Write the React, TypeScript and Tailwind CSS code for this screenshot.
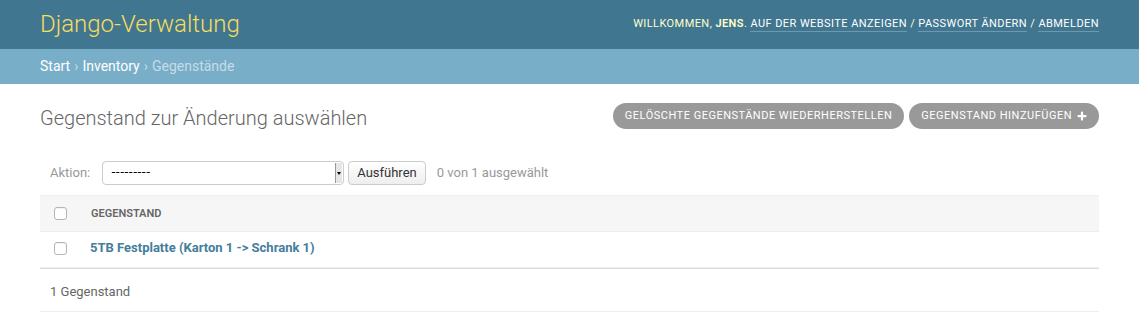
import { Plus } from 'lucide-react';

const font = { fontFamily: 'Roboto, "Liberation Sans", sans-serif' };

function Checkbox() {
  return <span className="inline-block w-[13px] h-[13px] rounded-[3px] border border-[#b5b5b5] bg-white shadow-[inset_0_1px_1px_rgba(0,0,0,0.05)]" />;
}

export default function App() {
  return (
    <div className="w-[1139px] h-[320px] bg-white overflow-hidden" style={font}>
      <header className="h-[49px] bg-[#417690] px-10 flex items-center justify-between">
        <h1 className="text-[24px] font-light text-[#f5dd5d] leading-none -mt-[2px]">Django-Verwaltung</h1>
        <div className="text-[11px] uppercase tracking-[0.43px] text-[#ffc] -mt-[1px]">
          Willkommen, <strong className="font-semibold">Jens</strong>.{' '}
          <a className="text-white border-b border-white/25 pb-[1px]">Auf der Website anzeigen</a> /{' '}
          <a className="text-white border-b border-white/25 pb-[1px]">Passwort ändern</a> /{' '}
          <a className="text-white border-b border-white/25 pb-[1px]">Abmelden</a>
        </div>
      </header>
      <div className="h-[35px] bg-[#79aec8] px-10 flex items-center text-[14px] text-[#c4dce8]">
        <a className="text-white">Start</a>
        <span className="mx-[4px]">›</span>
        <a className="text-white">Inventory</a>
        <span className="mx-[4px]">›</span>
        <span>Gegenstände</span>
      </div>
      <main className="px-10">
        <div className="flex items-center justify-between mt-[19px] h-[26px]">
          <h2 className="text-[20px] font-light text-[#666] mt-[4px]">Gegenstand zur Änderung auswählen</h2>
          <div className="flex gap-[5px]">
            <a className="h-[26px] flex items-center px-[12px] rounded-[15px] bg-[#999] text-white text-[11px] uppercase tracking-[0.5px]">
              Gelöschte Gegenstände wiederherstellen
            </a>
            <a className="h-[26px] flex items-center pl-[12px] pr-[11px] rounded-[15px] bg-[#999] text-white text-[11px] uppercase tracking-[0.5px]">
              Gegenstand hinzufügen
              <Plus className="ml-[4px] w-[12px] h-[12px]" strokeWidth={4.5} />
            </a>
          </div>
        </div>
        <div className="flex items-center mt-[32px] h-[24px] pl-[10px] text-[13px]">
          <span className="text-[#999] mr-[12px]">Aktion:</span>
          <div className="w-[242px] h-[24px] border border-[#ccc] rounded-[4px] flex items-center justify-between pl-[8px] bg-white">
            <span className="text-[12px] text-black leading-none -mt-[2px]" style={{ fontFamily: '"DejaVu Sans", sans-serif' }}>---------</span>
            <span className="w-[7px] h-[20px] mr-[1px] bg-[#e6e6e6] border-l border-[#999] flex items-center justify-center">
              <span className="w-0 h-0 border-l-[2px] border-r-[2px] border-t-[3px] border-l-transparent border-r-transparent border-t-black" />
            </span>
          </div>
          <button className="ml-[4px] h-[24px] px-[8px] border border-[#ccc] rounded-[4px] bg-gradient-to-b from-white to-[#eee] text-[13px] text-[#333]">
            Ausführen
          </button>
          <span className="ml-[11px] text-[#999]">0 von 1 ausgewählt</span>
        </div>
        <table className="w-full mt-[10px] border-collapse text-[13px]">
          <thead>
            <tr className="h-[36px] bg-[#f6f6f6] border-t border-[#eee]">
              <th className="w-[50px] text-left pl-[14px] pt-[5px]"><Checkbox /></th>
              <th className="text-left text-[11px] font-semibold text-[#666] uppercase pl-[1px] pt-[2px]">Gegenstand</th>
            </tr>
          </thead>
          <tbody>
            <tr className="h-[36px] border-t border-b border-[#eee]">
              <td className="pl-[14px] pt-[2px]"><Checkbox /></td>
              <td className="font-bold text-[#447e9b] pb-[3px]">5TB Festplatte (Karton 1 -&gt; Schrank 1)</td>
            </tr>
          </tbody>
        </table>
        <div className="h-[44px] border-t border-[#ddd] border-b border-b-[#eee] flex items-center pl-[10px] pt-[3px] text-[13px] text-[#666]">
          1 Gegenstand
        </div>
      </main>
    </div>
  );
}
